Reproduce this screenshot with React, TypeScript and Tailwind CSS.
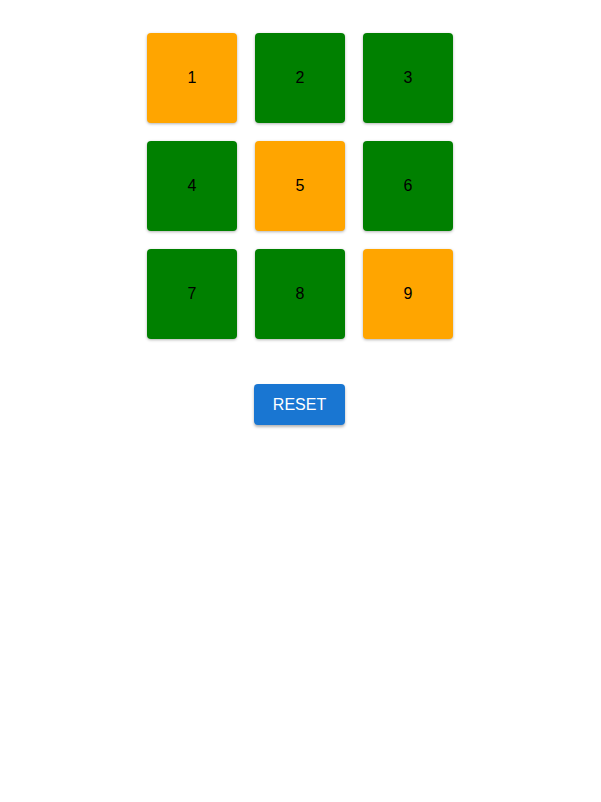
import React, { useState } from 'react';

const INITIAL = [true, false, false, false, true, false, false, false, true];

const App: React.FC = () => {
  const [lit, setLit] = useState<boolean[]>(INITIAL);

  const toggle = (i: number) => {
    setLit((prev) => prev.map((v, idx) => (idx === i ? !v : v)));
  };

  return (
    <div className="min-h-screen bg-white flex flex-col items-center pt-[33px] pr-px font-['Liberation_Sans',Arial,sans-serif]">
      {/* Tile grid */}
      <div className="grid grid-cols-[repeat(3,90px)] gap-[18px]">
        {lit.map((on, i) => (
          <button
            key={i}
            onClick={() => toggle(i)}
            className={`w-[90px] h-[90px] rounded-[4px] flex items-center justify-center text-base text-black shadow-[0_1px_3px_rgba(0,0,0,0.3)] ${
              on ? 'bg-[#ffa500]' : 'bg-[#008000]'
            }`}
          >
            {i + 1}
          </button>
        ))}
      </div>

      {/* Reset */}
      <button
        onClick={() => setLit(INITIAL)}
        className="mt-[45px] mr-px h-[41px] w-[91px] rounded-[4px] bg-[#1976d2] text-white text-base leading-none shadow-[0_2px_3px_rgba(0,0,0,0.3)]"
      >
        RESET
      </button>
    </div>
  );
};

export default App;
